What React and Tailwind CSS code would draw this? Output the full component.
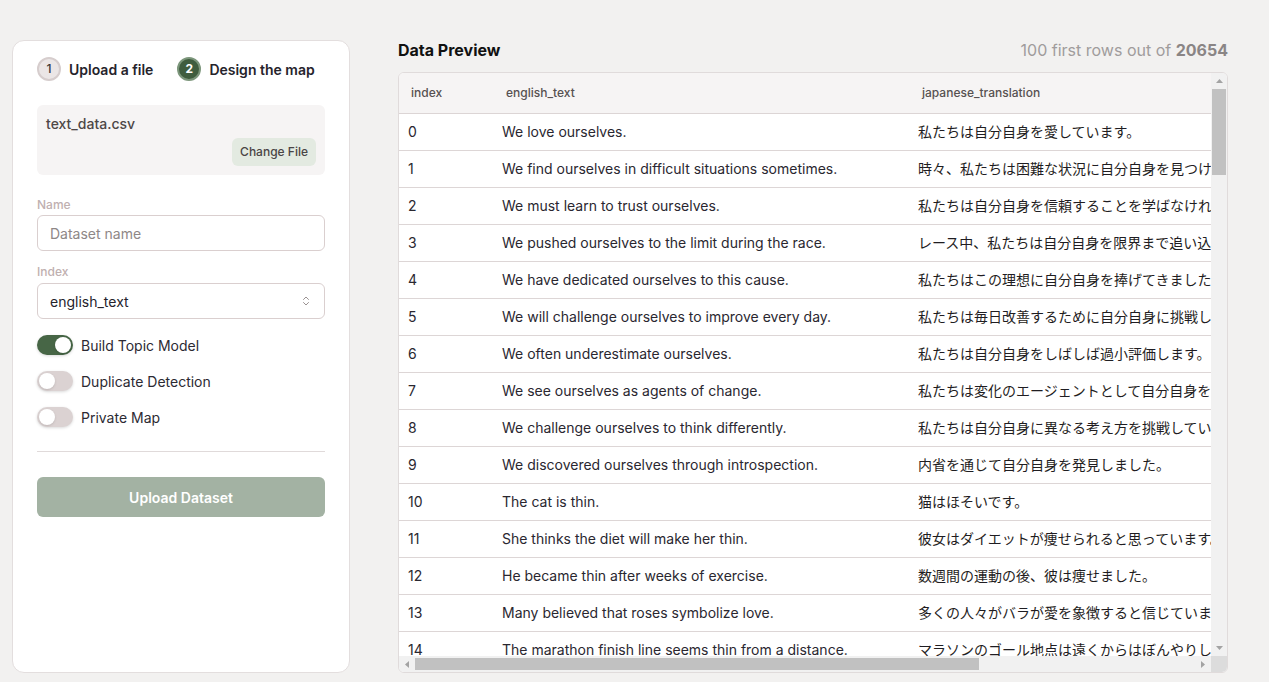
import React from "react";

const rows = [
  ["We love ourselves.", "私たちは自分自身を愛しています。"],
  ["We find ourselves in difficult situations sometimes.", "時々、私たちは困難な状況に自分自身を見つけます。"],
  ["We must learn to trust ourselves.", "私たちは自分自身を信頼することを学ばなければなりません。"],
  ["We pushed ourselves to the limit during the race.", "レース中、私たちは自分自身を限界まで追い込みました。"],
  ["We have dedicated ourselves to this cause.", "私たちはこの理想に自分自身を捧げてきました。"],
  ["We will challenge ourselves to improve every day.", "私たちは毎日改善するために自分自身に挑戦します。"],
  ["We often underestimate ourselves.", "私たちは自分自身をしばしば過小評価します。"],
  ["We see ourselves as agents of change.", "私たちは変化のエージェントとして自分自身を見ています。"],
  ["We challenge ourselves to think differently.", "私たちは自分自身に異なる考え方を挑戦しています。"],
  ["We discovered ourselves through introspection.", "内省を通じて自分自身を発見しました。"],
  ["The cat is thin.", "猫はほそいです。"],
  ["She thinks the diet will make her thin.", "彼女はダイエットが痩せられると思っています。"],
  ["He became thin after weeks of exercise.", "数週間の運動の後、彼は痩せました。"],
  ["Many believed that roses symbolize love.", "多くの人々がバラが愛を象徴すると信じていました。"],
  ["The marathon finish line seems thin from a distance.", "マラソンのゴール地点は遠くからはぼんやりして見えます。"],
];

function Toggle({ on, label }) {
  return (
    <div className="flex items-center gap-2 h-5">
      <div
        className={
          on
            ? "w-9 h-5 rounded-full bg-[#476646] flex items-center justify-end px-0.5 shadow-[0_1px_3px_rgba(0,0,0,0.15)]"
            : "w-9 h-5 rounded-full bg-[#dbd2d2] flex items-center justify-start px-0.5 shadow-[0_1px_3px_rgba(0,0,0,0.15)]"
        }
      >
        <div className="w-4 h-4 rounded-full bg-white shadow-sm" />
      </div>
      <span className="text-[14px] text-[#2c2a33]">{label}</span>
    </div>
  );
}

function Tri({ dir }) {
  const pts = {
    up: "0,4 3.5,0 7,4",
    down: "0,0 3.5,4 7,0",
    left: "4,0 0,3.5 4,7",
    right: "0,0 4,3.5 0,7",
  }[dir];
  const w = dir === "up" || dir === "down" ? 7 : 4;
  const h = dir === "up" || dir === "down" ? 4 : 7;
  return (
    <svg width={w} height={h} viewBox={`0 0 ${w} ${h}`}>
      <polygon points={pts} fill="#a3a3a3" />
    </svg>
  );
}

export default function App() {
  return (
    <div
      className="w-full h-[682px] bg-[#f2f1f0] flex pl-3 pt-10 pb-[9px] gap-[48px] overflow-hidden"
      style={{ fontFamily: 'Inter, "Noto Sans CJK JP", sans-serif' }}
    >
      {/* Left card */}
      <div className="w-[338px] shrink-0 bg-white border border-[#e3dede] rounded-xl px-6 pt-4 flex flex-col">
        <div className="flex items-center h-6">
          <div className="w-6 h-6 rounded-full bg-[#ebe6e6] border-2 border-[#d6cdcd] flex items-center justify-center text-[12px] font-medium text-[#3a3737]">
            1
          </div>
          <span className="ml-2 text-[14px] font-semibold text-[#25232b]">Upload a file</span>
          <div className="ml-6 w-6 h-6 rounded-full bg-[#3f5d3e] border-2 border-[#7c967b] flex items-center justify-center text-[12px] font-bold text-white">
            2
          </div>
          <span className="ml-2 text-[14px] font-semibold text-[#25232b]">Design the map</span>
        </div>

        <div className="mt-6 bg-[#f6f4f4] rounded-md p-[9px] flex flex-col">
          <span className="text-[14px] font-medium text-[#4d4747] leading-5">text_data.csv</span>
          <div className="flex justify-end mt-1">
            <button className="h-7 px-2 rounded-md bg-[#e3eae1] text-[12px] font-medium text-[#4a4545]">
              Change File
            </button>
          </div>
        </div>

        <label className="mt-[22px] text-[12px] font-medium text-[#bfb0b0] leading-4">Name</label>
        <div className="mt-0.5 h-9 rounded-md border border-[#dacfcf] flex items-center px-3 text-[14px] text-[#8e8787]">
          Dataset name
        </div>

        <label className="mt-[13px] text-[12px] font-medium text-[#bfb0b0] leading-4">Index</label>
        <div className="mt-[3px] h-9 rounded-md border border-[#dacfcf] flex items-center justify-between px-3 text-[14px] text-[#25232b]">
          <span>english_text</span>
          <svg width="12" height="12" viewBox="0 0 24 24" fill="none" stroke="#9a9292" strokeWidth="2" strokeLinecap="round" strokeLinejoin="round">
            <path d="m7 15 5 5 5-5" />
            <path d="m7 9 5-5 5 5" />
          </svg>
        </div>

        <div className="mt-4 flex flex-col gap-4">
          <Toggle on label="Build Topic Model" />
          <Toggle label="Duplicate Detection" />
          <Toggle label="Private Map" />
        </div>

        <div className="mt-6 h-px bg-[#e0dada]" />

        <button className="mt-[25px] h-10 rounded-md bg-[#a3b2a3] text-white text-[14px] font-semibold">
          Upload Dataset
        </button>
      </div>

      {/* Right panel */}
      <div className="flex-1 min-w-0 pr-[41px] flex flex-col">
        <div className="h-5 flex items-center justify-between">
          <span className="text-[16px] font-bold text-[#111]">Data Preview</span>
          <span className="text-[16px] text-[#a09c9c]">
            100 first rows out of <span className="font-bold text-[#8a8585]">20654</span>
          </span>
        </div>
        <div className="mt-3 flex-1 min-h-0 border border-[#e0dbdb] rounded-md bg-white overflow-hidden flex flex-col">
          <div className="flex-1 min-h-0 flex">
            <div className="flex-1 min-w-0 overflow-hidden">
              <table className="border-collapse w-[1125px] table-fixed">
                <colgroup>
                  <col className="w-[95px]" />
                  <col className="w-[416px]" />
                  <col className="w-[614px]" />
                </colgroup>
                <thead>
                  <tr className="h-[40px] bg-[#f6f4f4] border-b border-[#dcd5d5]">
                    <th className="text-left font-medium text-[12px] text-[#575151] pl-3">index</th>
                    <th className="text-left font-medium text-[12px] text-[#575151] pl-3">english_text</th>
                    <th className="text-left font-medium text-[12px] text-[#575151] pl-3">japanese_translation</th>
                  </tr>
                </thead>
                <tbody>
                  {rows.map((r, i) => (
                    <tr key={i} className="h-[37px] border-b border-[#ddd6d6]">
                      <td className="pl-[9px] text-[14px] text-[#2a2730] whitespace-nowrap">{i}</td>
                      <td className="pl-2 text-[14px] text-[#2a2730] whitespace-nowrap overflow-hidden">{r[0]}</td>
                      <td className="pl-2 text-[14px] text-[#1f1d22] whitespace-nowrap overflow-hidden">{r[1]}</td>
                    </tr>
                  ))}
                </tbody>
              </table>
            </div>
            {/* vertical scrollbar */}
            <div className="w-[16px] shrink-0 bg-[#f1f1f1] flex flex-col items-center">
              <div className="h-[16px] w-full flex items-center justify-center">
                <Tri dir="up" />
              </div>
              <div className="flex-1 w-full px-[1px]">
                <div className="h-[86px] w-full bg-[#c1c1c1]" />
              </div>
              <div className="h-[16px] w-full flex items-center justify-center">
                <Tri dir="down" />
              </div>
            </div>
          </div>
          {/* horizontal scrollbar */}
          <div className="h-[16px] shrink-0 flex">
            <div className="flex-1 bg-[#f1f1f1] flex items-center">
              <div className="w-[16px] h-full flex items-center justify-center">
                <Tri dir="left" />
              </div>
              <div className="flex-1 h-full py-[2px]">
                <div className="w-[564px] h-full bg-[#c1c1c1]" />
              </div>
              <div className="w-[16px] h-full flex items-center justify-center">
                <Tri dir="right" />
              </div>
            </div>
            <div className="w-[16px] bg-[#dcdcdc]" />
          </div>
        </div>
      </div>
    </div>
  );
}
